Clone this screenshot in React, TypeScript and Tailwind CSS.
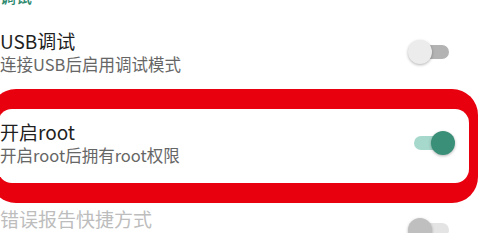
const font = { fontFamily: '"Noto Sans CJK SC", "Noto Sans", sans-serif' };

function Toggle({ on, disabled }: { on?: boolean; disabled?: boolean }) {
  const track = on ? 'bg-[#a6d8cb]' : disabled ? 'bg-[#e4e4e4]' : 'bg-[#b3b3b3]';
  const thumb = on ? 'bg-[#3a8f78] right-0' : disabled ? 'bg-[#bfbfbf] left-0' : 'bg-[#ececec] left-0';
  return (
    <div className="relative w-[48px] h-[26px] shrink-0">
      <div className={`absolute left-[7px] right-[7px] top-[6px] h-[14px] rounded-full ${track}`} />
      <div className={`absolute top-[1px] w-[24px] h-[24px] rounded-full shadow-[0_1px_3px_rgba(0,0,0,0.3)] ${thumb}`} />
    </div>
  );
}

function Row({ title, desc, on, disabled }: { title: string; desc?: string; on?: boolean; disabled?: boolean }) {
  return (
    <div className="flex items-center justify-between">
      <div>
        <div className={`text-[19px] leading-[24px] ${disabled ? 'text-[#bdbdbd]' : 'text-[#1f1f1f]'}`}>{title}</div>
        {desc ? (
          <div className="text-[16.5px] leading-[22px] text-[#666666]">{desc}</div>
        ) : (
          <div className="h-[22px]" />
        )}
      </div>
      <Toggle on={on} disabled={disabled} />
    </div>
  );
}

export default function App() {
  return (
    <div className="w-[484px] h-[233px] overflow-hidden bg-white" style={font}>
      <div className="mt-[-14px] text-[16px] leading-[20px] text-[#2f8a6f] font-medium">调试</div>

      <div className="mt-[23px] pr-[28px]">
        <Row title="USB调试" desc="连接USB后启用调试模式" />
      </div>

      <div className="mt-[14px] ml-[-10px] mr-[6px] bg-[#e8000f] rounded-[26px] pt-[20px] pb-[20px] pl-[8px] pr-[9px]">
        <div className="bg-white rounded-[14px] pl-[2px] pr-[14px] pt-[11px] pb-[17px]">
          <Row title="开启root" desc="开启root后拥有root权限" on />
        </div>
      </div>

      <div className="mt-[4px] pr-[28px]">
        <Row title="错误报告快捷方式" disabled />
      </div>
    </div>
  );
}
